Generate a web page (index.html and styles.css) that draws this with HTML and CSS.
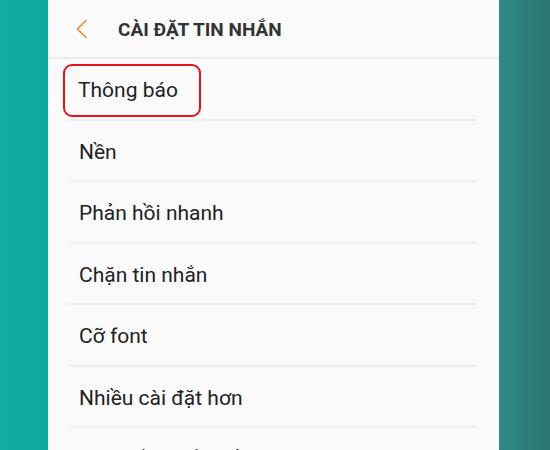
FILE: index.html
```html
<!DOCTYPE html>
<html lang="vi">
<head>
  <meta charset="UTF-8">
  <meta name="viewport" content="width=device-width, initial-scale=1.0">
  <title>Cài đặt tin nhắn</title>
  <link rel="stylesheet" href="styles.css">
</head>
<body>
  <div class="screen">
    <header class="top-bar">
      <a class="back" href="#">
        <svg width="12" height="20" viewBox="0 0 12 20">
          <polyline points="10.5,1 1.5,10 10.5,19" fill="none" stroke="#ec8a35" stroke-width="1.6"/>
        </svg>
      </a>
      <h1>CÀI ĐẶT TIN NHẮN</h1>
    </header>

    <ul class="settings">
      <li><span class="label selected">Thông báo</span></li>
      <li><span class="label">Nền</span></li>
      <li><span class="label">Phản hồi nhanh</span></li>
      <li><span class="label">Chặn tin nhắn</span></li>
      <li><span class="label">Cỡ font</span></li>
      <li><span class="label">Nhiều cài đặt hơn</span></li>
      <li><span class="label">Tin nhắn khẩn cấp</span></li>
    </ul>
  </div>
</body>
</html>
```

FILE: styles.css
```css
html, body {
  height: 100%;
}

body {
  margin: 0;
  padding: 0;
  overflow: hidden;
  font-family: Roboto, "Noto Sans", sans-serif;
  background: linear-gradient(to right, #13aca3 0, #0fa89f 48px, #2f8a84 499px, #2a7571 550px);
}

.screen {
  margin-left: 48px;
  width: 451px;
  height: 100%;
  background-color: #fafafa;
}

.top-bar {
  display: flex;
  align-items: center;
  height: 57px;
  border-bottom: 2px solid #ececec;
}

.back {
  display: flex;
  margin-left: 28px;
  width: 12px;
}

.top-bar h1 {
  margin: 2px 0 0 30px;
  font-size: 19px;
  font-weight: bold;
  color: #333;
}

.settings {
  list-style-type: none;
  margin: 0 22px 0 22px;
  padding: 0;
}

.settings li {
  display: flex;
  align-items: center;
  height: 57px;
  padding-top: 2.5px;
  border-bottom: 2px solid #efefef;
}

.label {
  font-size: 21px;
  color: #222;
  padding-left: 9px;
}

.selected {
  display: flex;
  align-items: center;
  margin-left: -7px;
  padding: 0 21px 0 13px;
  height: 49px;
  border: 2px solid #e5141b;
  border-radius: 9px;
}
```
